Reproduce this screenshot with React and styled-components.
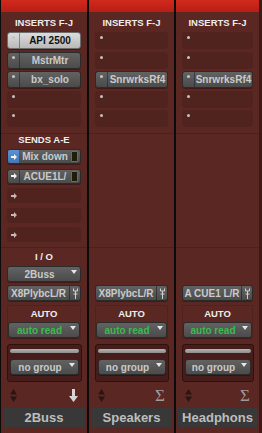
import styled, { createGlobalStyle } from "styled-components";

const strips = [
  {
    name: "2Buss",
    inserts: [
      { name: "API 2500", active: true },
      { name: "MstrMtr" },
      { name: "bx_solo" },
      null,
      null,
    ],
    sends: [{ name: "Mix down", blue: true }, { name: "ACUE1L/" }, null, null, null],
    input: "2Buss",
    output: "X8PlybcL/R",
    icon: "down",
  },
  {
    name: "Speakers",
    inserts: [null, null, { name: "SnrwrksRf4" }, null, null],
    sends: null,
    output: "X8PlybcL/R",
    icon: "sigma",
  },
  {
    name: "Headphons",
    inserts: [null, null, { name: "SnrwrksRf4" }, null, null],
    sends: null,
    output: "A CUE1 L/R",
    icon: "sigma",
  },
];

const GlobalStyle = createGlobalStyle`
  body {
    margin: 0;
    background: #0b0b0b;
    font-family: "Liberation Sans", Arial, sans-serif;
  }
`;

const Mixer = styled.div`
  display: grid;
  grid-template-columns: 86px 85px 86px;
  column-gap: 2px;
  width: 262px;
  height: 433px;
  padding-left: 1px;
  box-sizing: border-box;
  background: #0b0b0b;
  overflow: hidden;
`;

const Strip = styled.div`
  display: flex;
  flex-direction: column;
  background: #5a2723;
  box-sizing: border-box;
  border-right: ${(p) => (p.$last ? "3px solid #3e1a17" : "none")};
`;

const TopBar = styled.div`
  height: 12px;
  flex-shrink: 0;
  background: linear-gradient(#d02a1c, #b81e15);
`;

const Section = styled.div`
  display: flex;
  flex-direction: column;
  height: ${(p) => p.$h}px;
  flex-shrink: 0;
  padding: ${(p) => p.$pt || 0}px 6px 0;
  box-sizing: border-box;
  border-bottom: ${(p) => (p.$line ? "1px solid rgba(0,0,0,0.16)" : "none")};
`;

const Label = styled.div`
  height: 12px;
  line-height: 12px;
  text-align: center;
  font-weight: bold;
  font-size: 9.5px;
  color: #eeeeee;
  white-space: nowrap;
  visibility: ${(p) => (p.$hidden ? "hidden" : "visible")};
`;

const SlotList = styled.div`
  display: flex;
  flex-direction: column;
  gap: ${(p) => p.$gap}px;
  margin-top: 3px;
`;

const Slot = styled.div`
  display: flex;
  height: ${(p) => p.$h}px;
  border-radius: 3px;
  background: ${(p) => (p.$empty ? "rgba(0,0,0,0.09)" : "transparent")};
  visibility: ${(p) => (p.$hidden ? "hidden" : "visible")};
`;

const EmptyLead = styled.div`
  width: 13px;
  display: flex;
  justify-content: center;
  align-items: ${(p) => (p.$center ? "center" : "flex-start")};
  padding-top: ${(p) => (p.$center ? 0 : 4)}px;
  box-sizing: border-box;
`;

const Dot = styled.span`
  width: 3px;
  height: 3px;
  border-radius: 50%;
  background: #c9c2c2;
`;

const Btn = styled.div`
  flex: 1;
  min-width: 0;
  display: flex;
  border: 1px solid ${(p) => (p.$active ? "#6d6d6d" : "#2b2b2b")};
  border-radius: 3px;
  background: ${(p) =>
    p.$active ? "linear-gradient(#dcdcdc, #b9b9b9)" : "linear-gradient(#626262, #4b4b4b)"};
  color: ${(p) => (p.$active ? "#111111" : "#cacaca")};
  box-shadow: 0 1px 0 rgba(0, 0, 0, 0.3);
  overflow: hidden;
`;

const Lead = styled.div`
  width: 12px;
  flex-shrink: 0;
  display: flex;
  justify-content: center;
  align-items: ${(p) => (p.$center ? "center" : "flex-start")};
  padding-top: ${(p) => (p.$center ? 0 : 3)}px;
  box-sizing: border-box;
  border-right: 1px solid rgba(0, 0, 0, 0.35);
  background: ${(p) => (p.$blue ? "linear-gradient(#5c92d2, #4277b8)" : "transparent")};
`;

const BtnText = styled.div`
  flex: 1;
  min-width: 0;
  display: flex;
  align-items: center;
  justify-content: center;
  font-weight: bold;
  font-size: 10px;
  white-space: nowrap;
  color: ${(p) => p.$color || "inherit"};
`;

const Meter = styled.div`
  width: 5px;
  height: 9px;
  align-self: center;
  margin: 0 2px 0 1px;
  border: 1px solid #72742a;
  border-radius: 1px;
  background: #1d1d0a;
`;

const Caret = styled.svg`
  flex-shrink: 0;
  align-self: flex-start;
  margin: 3px 3px 0 0;
`;

const PathBtn = styled.div`
  width: 10px;
  flex-shrink: 0;
  display: flex;
  align-items: center;
  justify-content: center;
  border-left: 1px solid rgba(0, 0, 0, 0.4);
`;

const IOBtn = styled(Btn)`
  flex: none;
  height: 16px;
  box-sizing: border-box;
  margin-top: 3px;
  visibility: ${(p) => (p.$hidden ? "hidden" : "visible")};
`;

const AutoBox = styled.div`
  display: flex;
  flex-direction: column;
  height: 35px;
  margin: 0 6px;
  padding: 2px 0 0;
  box-sizing: border-box;
  border-radius: 2px;
  border: 1px solid rgba(0, 0, 0, 0.12);
  border-bottom: none;
  flex-shrink: 0;
`;

const AutoBtn = styled(Btn)`
  flex: none;
  height: 16px;
  box-sizing: border-box;
  margin-top: 2px;
`;

const GroupBox = styled.div`
  display: flex;
  flex-direction: column;
  height: 38px;
  margin: 4px 5px 0 6px;
  padding: 4px 2px 0;
  box-sizing: border-box;
  border: 1px solid #2c110f;
  border-radius: 3px;
  background: #461d1a;
  flex-shrink: 0;
`;

const Fader = styled.div`
  height: 4px;
  border-radius: 2px;
  background: linear-gradient(#b5b5b5, #8c8c8c);
`;

const GroupBtn = styled(Btn)`
  flex: none;
  height: 16px;
  box-sizing: border-box;
  margin-top: 6px;
`;

const BottomRow = styled.div`
  display: flex;
  align-items: center;
  justify-content: space-between;
  height: 26px;
  padding: 0 9px 0 9px;
  flex-shrink: 0;
`;

const Sigma = styled.span`
  font-family: "Liberation Serif", "Times New Roman", serif;
  font-size: 17px;
  line-height: 17px;
  color: #9c9c9c;
`;

const NameBar = styled.div`
  height: 19px;
  line-height: 19px;
  margin: 0 2px;
  background: #383838;
  color: #bdbdbd;
  font-weight: bold;
  font-size: 13px;
  text-align: center;
  white-space: nowrap;
  overflow: hidden;
  flex-shrink: 0;
`;

const SendArrow = ({ color }) => (
  <svg width="6" height="6" viewBox="0 0 6 6">
    <path d="M0 2h3V0l3 3-3 3V4H0z" fill={color} />
  </svg>
);

const CaretIcon = () => (
  <Caret width="6" height="4" viewBox="0 0 6 4">
    <path d="M0 0h6L3 4z" fill="#e6e6e6" />
  </Caret>
);

const PathIcon = () => (
  <svg width="5" height="11" viewBox="0 0 5 11">
    <path d="M0.5 0.5v2.5h4V0.5M2.5 3v8M0.5 6h4" stroke="#d0d0d0" strokeWidth="1" fill="none" />
  </svg>
);

const UpDown = () => (
  <svg width="7" height="13" viewBox="0 0 7 13">
    <path d="M0 5.5L3.5 0 7 5.5z" fill="#2c1411" />
    <path d="M0 7.5h7L3.5 13z" fill="#2c1411" />
  </svg>
);

const DownArrow = () => (
  <svg width="9" height="13" viewBox="0 0 9 13">
    <path d="M3 0h3v7h3L4.5 13 0 7h3z" fill="#d6d6d6" />
  </svg>
);

const InsertSlot = ({ item }) => (
  <Slot $h={17} $empty={!item}>
    {item ? (
      <Btn $active={item.active}>
        <Lead>
          <Dot />
        </Lead>
        <BtnText>{item.name}</BtnText>
      </Btn>
    ) : (
      <EmptyLead>
        <Dot />
      </EmptyLead>
    )}
  </Slot>
);

const SendSlot = ({ item, hidden }) => (
  <Slot $h={15} $empty={!item} $hidden={hidden}>
    {item ? (
      <Btn>
        <Lead $center $blue={item.blue}>
          <SendArrow color="#f2f2f2" />
        </Lead>
        <BtnText>{item.name}</BtnText>
        <Meter />
      </Btn>
    ) : (
      <EmptyLead $center>
        <SendArrow color="#c7b7b5" />
      </EmptyLead>
    )}
  </Slot>
);

const ChannelStrip = ({ strip, last }) => {
  const sends = strip.sends || [null, null, null, null, null];
  return (
    <Strip $last={last}>
      <TopBar />
      <Section $h={122} $pt={5} $line>
        <Label>INSERTS F-J</Label>
        <SlotList $gap={2.5}>
          {strip.inserts.map((item, i) => (
            <InsertSlot key={i} item={item} />
          ))}
        </SlotList>
      </Section>
      <Section $h={114} $line>
        <Label $hidden={!strip.sends}>SENDS A-E</Label>
        <SlotList $gap={4.5}>
          {sends.map((item, i) => (
            <SendSlot key={i} item={item} hidden={!strip.sends} />
          ))}
        </SlotList>
      </Section>
      <Section $h={57} $pt={3}>
        <Label $hidden={!strip.input}>I / O</Label>
        <IOBtn $hidden={!strip.input}>
          <BtnText>{strip.input || "-"}</BtnText>
          <CaretIcon />
        </IOBtn>
        <IOBtn>
          <BtnText>{strip.output}</BtnText>
          <PathBtn>
            <PathIcon />
          </PathBtn>
        </IOBtn>
      </Section>
      <AutoBox>
        <Label>AUTO</Label>
        <AutoBtn>
          <BtnText $color="#3dbb4e">auto read</BtnText>
          <CaretIcon />
        </AutoBtn>
      </AutoBox>
      <GroupBox>
        <Fader />
        <GroupBtn>
          <BtnText>no group</BtnText>
          <CaretIcon />
        </GroupBtn>
      </GroupBox>
      <BottomRow>
        <UpDown />
        {strip.icon === "down" ? <DownArrow /> : <Sigma>Σ</Sigma>}
      </BottomRow>
      <NameBar>{strip.name}</NameBar>
    </Strip>
  );
};

export default function App() {
  return (
    <>
      <GlobalStyle />
      <Mixer>
        {strips.map((s, i) => (
          <ChannelStrip key={s.name} strip={s} last={i === strips.length - 1} />
        ))}
      </Mixer>
    </>
  );
}
